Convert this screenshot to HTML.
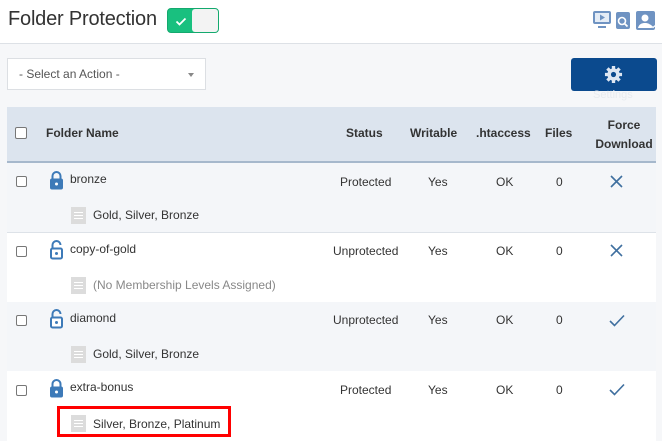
<!DOCTYPE html>
<html><head><style>
*{box-sizing:border-box;margin:0;padding:0}
body{width:662px;height:441px;overflow:hidden;background:#f6f7f9;font-family:"Liberation Sans",sans-serif;position:relative;color:#333}
.a{position:absolute}
.top{left:0;top:0;width:662px;height:44px;background:#fff;border-bottom:1px solid #dde1e6}
h1{position:absolute;left:8px;top:8px;font-weight:normal;font-size:20px;color:#333;letter-spacing:-0.2px}
.tog{left:167px;top:8px;width:52px;height:25px;border-radius:4px;background:#19c07f;border:1px solid #14a96e}
.tog .k{position:absolute;right:0;top:0;width:26px;height:23px;background:#f3f3f3;border-radius:3px}
.sel{left:7px;top:58px;width:199px;height:32px;background:#fff;border:1px solid #dcdfe3;font-size:12px;color:#555;padding:8px 0 0 11px}
.btn{left:571px;top:58px;width:86px;height:33px;background:#0b4a8e;border-radius:3px}
.tbl{left:7px;top:107px;width:649px;height:334px;background:#fff}
.hd{left:0;top:0;width:649px;height:56px;background:#dce4ee;border-bottom:2px solid #a6b8cc}
.th{position:absolute;font-weight:bold;font-size:12px;color:#333}
.row{position:absolute;left:0;width:649px;height:70px;border-bottom:1px solid #dde2e8}
.cb{position:absolute;width:11px;height:11px;border:1px solid #777;border-radius:2px;background:#fff}
.t{position:absolute;font-size:12px;color:#333}
.lv{position:absolute;font-size:12px;color:#333}
.doc{position:absolute;left:64px;width:15px;height:17px;background:#dcdcdc}
.doc i{position:absolute;left:3px;width:9px;height:1px;background:#fff}
</style></head><body>
<div class="a top"></div>
<h1>Folder Protection</h1>
<div class="a tog"><svg class="a" style="left:7px;top:6px" width="12" height="12" viewBox="0 0 12 12"><path d="M1.5 6.5l3 3 6-6" fill="none" stroke="#fff" stroke-width="1.8"/></svg><div class="k"></div></div>
<svg class="a" style="left:592px;top:10px" width="70" height="20" viewBox="0 0 70 20">
<rect x="1" y="1" width="18" height="13" rx="2" fill="#6f93c2"/><rect x="3" y="3" width="14" height="9" fill="#e4ecf6"/><path d="M8 4.5l5 3-5 3z" fill="#6f93c2"/><rect x="6" y="16" width="8" height="2" fill="#6f93c2"/>
<rect x="24" y="2" width="14" height="17" rx="2" fill="#6f93c2"/><circle cx="30" cy="11" r="3.5" fill="none" stroke="#fff" stroke-width="1.6"/><path d="M32.5 13.5l3 3" stroke="#fff" stroke-width="1.8"/>
<rect x="44" y="1" width="19" height="19" rx="2" fill="#6f93c2"/><circle cx="53" cy="8" r="3.5" fill="#fff"/><path d="M46 18c1-4 4-5 7-5s6 1 7 5z" fill="#fff"/><path d="M58 15l3 2.5 3-2.5" fill="none" stroke="#fff" stroke-width="1.2"/>
</svg>
<div class="a sel">- Select an Action -<span class="a" style="left:180px;top:14px;border:3px solid transparent;border-top:4px solid #888"></span></div>
<div class="a btn"><svg class="a" style="left:33px;top:7px" width="19" height="19" viewBox="0 0 20 20"><g fill="#dde6f2"><circle cx="10" cy="10" r="6.5"/><g stroke="#dde6f2" stroke-width="3.5"><path d="M10 1v18M1 10h18M3.6 3.6l12.8 12.8M16.4 3.6L3.6 16.4"/></g></g><circle cx="10" cy="10" r="2.7" fill="#0b4a8e"/></svg></div>
<div class="a" style="left:593px;top:89px;font-size:11px;color:#e8ebef">Settings</div>
<div class="a tbl">
<div class="a hd"></div>
<div class="cb" style="left:8px;top:20px;width:12px;height:12px"></div>
<div class="th" style="left:39px;top:19px">Folder Name</div>
<div class="th" style="left:339px;top:19px">Status</div>
<div class="th" style="left:403px;top:19px">Writable</div>
<div class="th" style="left:469px;top:19px">.htaccess</div>
<div class="th" style="left:538px;top:19px">Files</div>
<div class="th" style="left:584px;top:9px;width:66px;text-align:center;line-height:19px">Force<br>Download</div>
</div>
<div class="a" style="left:7px;top:163px;width:649px;height:278px">
<div class="row" style="top:0;background:#f4f6f9"></div>
<div class="row" style="top:70px;background:#fff"></div>
<div class="row" style="top:139px;background:#f4f6f9"></div>
<div class="row" style="top:208px;background:#fff;border:none"></div>
</div>
<div class="a" style="left:7px;top:163px;width:649px;height:278px">
<div class="cb" style="left:9px;top:13px"></div>
<svg class="a" style="left:42px;top:7px" width="15" height="20" viewBox="0 0 15 20"><path d="M3.5 9V6a4 4 0 0 1 8 0v3" fill="none" stroke="#3d7ab8" stroke-width="2"/><rect x="1" y="8.5" width="13" height="11" rx="2" fill="#3d7ab8"/><circle cx="7.5" cy="14" r="1.5" fill="#fff"/></svg>
<div class="t" style="left:63px;top:9px">bronze</div>
<div class="doc" style="top:44px"><i style="top:5px"></i><i style="top:8px"></i><i style="top:11px"></i></div>
<div class="lv" style="left:86px;top:45px">Gold, Silver, Bronze</div>
<div class="t" style="left:333px;top:12px">Protected</div>
<div class="t" style="left:421px;top:12px">Yes</div>
<div class="t" style="left:489px;top:12px">OK</div>
<div class="t" style="left:549px;top:12px">0</div>
<svg class="a" style="left:603px;top:12px" width="13" height="13"><path d="M1 1l11 11M12 1L1 12" stroke="#3f6f9f" stroke-width="1.6"/></svg>
<div class="cb" style="left:9px;top:83px"></div>
<svg class="a" style="left:42px;top:76px" width="15" height="21" viewBox="0 0 15 21"><path d="M3.5 9V6a4 4 0 0 1 8 0" fill="none" stroke="#3d7ab8" stroke-width="2"/><rect x="2" y="9.5" width="11" height="10" rx="1.5" fill="#fff" stroke="#3d7ab8" stroke-width="2"/><circle cx="7.5" cy="14.5" r="1.5" fill="#3d7ab8"/></svg>
<div class="t" style="left:63px;top:79px">copy-of-gold</div>
<div class="doc" style="top:114px"><i style="top:5px"></i><i style="top:8px"></i><i style="top:11px"></i></div>
<div class="lv" style="left:86px;top:115px;color:#888">(No Membership Levels Assigned)</div>
<div class="t" style="left:326px;top:81px">Unprotected</div>
<div class="t" style="left:421px;top:81px">Yes</div>
<div class="t" style="left:489px;top:81px">OK</div>
<div class="t" style="left:549px;top:81px">0</div>
<svg class="a" style="left:603px;top:81px" width="13" height="13"><path d="M1 1l11 11M12 1L1 12" stroke="#3f6f9f" stroke-width="1.6"/></svg>
<div class="cb" style="left:9px;top:152px"></div>
<svg class="a" style="left:42px;top:145px" width="15" height="21" viewBox="0 0 15 21"><path d="M3.5 9V6a4 4 0 0 1 8 0" fill="none" stroke="#3d7ab8" stroke-width="2"/><rect x="2" y="9.5" width="11" height="10" rx="1.5" fill="#fff" stroke="#3d7ab8" stroke-width="2"/><circle cx="7.5" cy="14.5" r="1.5" fill="#3d7ab8"/></svg>
<div class="t" style="left:63px;top:148px">diamond</div>
<div class="doc" style="top:183px"><i style="top:5px"></i><i style="top:8px"></i><i style="top:11px"></i></div>
<div class="lv" style="left:86px;top:184px">Gold, Silver, Bronze</div>
<div class="t" style="left:326px;top:150px">Unprotected</div>
<div class="t" style="left:421px;top:150px">Yes</div>
<div class="t" style="left:489px;top:150px">OK</div>
<div class="t" style="left:549px;top:150px">0</div>
<svg class="a" style="left:602px;top:151px" width="16" height="13"><path d="M1 7l4.5 4.5L15 1.5" fill="none" stroke="#3f6f9f" stroke-width="1.6"/></svg>
<div class="cb" style="left:9px;top:222px"></div>
<svg class="a" style="left:42px;top:215px" width="15" height="20" viewBox="0 0 15 20"><path d="M3.5 9V6a4 4 0 0 1 8 0v3" fill="none" stroke="#3d7ab8" stroke-width="2"/><rect x="1" y="8.5" width="13" height="11" rx="2" fill="#3d7ab8"/><circle cx="7.5" cy="14" r="1.5" fill="#fff"/></svg>
<div class="t" style="left:63px;top:217px">extra-bonus</div>
<div class="a" style="left:50px;top:243px;width:174px;height:31px;border:3px solid #f00"></div>
<div class="doc" style="top:252px"><i style="top:5px"></i><i style="top:8px"></i><i style="top:11px"></i></div>
<div class="lv" style="left:86px;top:254px">Silver, Bronze, Platinum</div>
<div class="t" style="left:333px;top:220px">Protected</div>
<div class="t" style="left:421px;top:220px">Yes</div>
<div class="t" style="left:489px;top:220px">OK</div>
<div class="t" style="left:549px;top:220px">0</div>
<svg class="a" style="left:602px;top:220px" width="16" height="13"><path d="M1 7l4.5 4.5L15 1.5" fill="none" stroke="#3f6f9f" stroke-width="1.6"/></svg>
</div>
</body></html>
